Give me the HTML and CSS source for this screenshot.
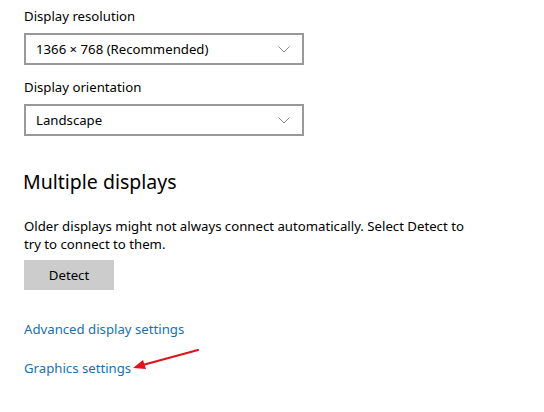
FILE: index.html
```html
<!DOCTYPE html>
<html lang="en">
<head>
    <meta charset="UTF-8">
    <title>Display settings</title>
    <link rel="stylesheet" href="styles.css">
</head>
<body>
    <div class="page">
        <div class="field">
            <div class="label">Display resolution</div>
            <div class="select">
                <span>1366 × 768 (Recommended)</span>
                <svg class="chev" width="12" height="7" viewBox="0 0 12 7"><path d="M0.5 0.5 L6 6 L11.5 0.5" fill="none" stroke="#888" stroke-width="1"/></svg>
            </div>
        </div>
        <div class="field">
            <div class="label">Display orientation</div>
            <div class="select">
                <span>Landscape</span>
                <svg class="chev" width="12" height="7" viewBox="0 0 12 7"><path d="M0.5 0.5 L6 6 L11.5 0.5" fill="none" stroke="#888" stroke-width="1"/></svg>
            </div>
        </div>

        <h2>Multiple displays</h2>
        <p class="note">Older displays might not always connect automatically. Select Detect to try to connect to them.</p>
        <button class="btn">Detect</button>

        <a class="link first" href="#">Advanced display settings</a>
        <div class="row">
            <a class="link" href="#">Graphics settings</a>
            <svg class="arrow" width="72" height="24" viewBox="0 0 72 24">
                <path d="M67 2 L8 18" stroke="#e0131a" stroke-width="2.2" stroke-linecap="round"/>
                <path d="M2 20 L12 12 L15 21 Z" fill="#e0131a"/>
            </svg>
        </div>
    </div>
</body>
</html>
```

FILE: styles.css
```css
*{
    margin: 0;
    padding: 0;
    box-sizing: border-box;
}
body{
    background: #fff;
    font-family: 'Noto Sans', 'Open Sans', sans-serif;
    font-size: 13.2px;
    color: #000;
}
.page{
    padding: 6px 24px 0 24px;
}
.field{
    margin-bottom: 12px;
}
.label{
    height: 21px;
    line-height: 21px;
    margin-bottom: 6px;
}
.select{
    width: 280px;
    height: 32px;
    border: 2px solid #999;
    display: flex;
    align-items: center;
    justify-content: space-between;
    padding: 0 10px 0 10px;
}
.chev{
    display: block;
    margin-right: 2px;
}
h2{
    font-weight: 400;
    font-size: 19.5px;
    margin-top: 32px;
    margin-left: -1px;
    line-height: 28px;
}
.note{
    margin-top: 21px;
    line-height: 18px;
    width: 460px;
}
.btn{
    display: block;
    width: 90px;
    height: 30px;
    margin-top: 7px;
    border: none;
    background: #ccc;
    font-family: inherit;
    font-size: 13.2px;
    color: #000;
}
.link{
    display: block;
    color: #1a6fb0;
    text-decoration: none;
}
.link.first{
    margin-top: 30px;
}
.row{
    display: flex;
    align-items: flex-start;
    margin-top: 21px;
}
.arrow{
    display: block;
    margin-left: 0;
    margin-top: -11px;
}
```
